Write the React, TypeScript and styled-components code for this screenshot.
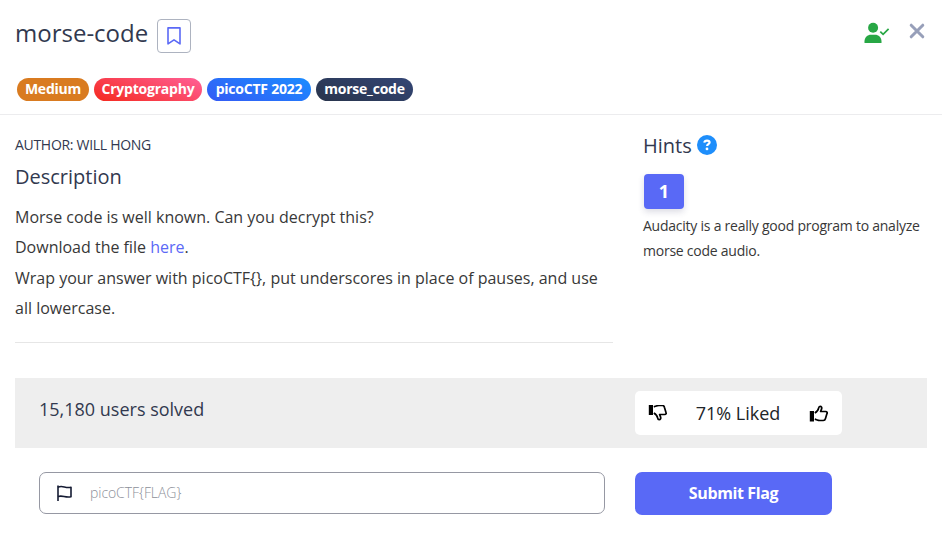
import React from "react";
import styled, { createGlobalStyle } from "styled-components";

const GlobalStyle = createGlobalStyle`
  * { box-sizing: border-box; }
  body {
    margin: 0;
    background: #fff;
    color: #383838;
    font-family: "Open Sans", sans-serif;
    font-size: 16px;
  }
  h1, h2, p { margin: 0; font-weight: 400; }
  button, input { font-family: inherit; }
`;

const Modal = styled.main`
  width: 942px;
  height: 543px;
  background: #fff;
  overflow: hidden;
`;

const Header = styled.header`
  height: 115px;
  padding: 18px 15px 0;
  border-bottom: 1px solid #ececee;
`;

const TitleRow = styled.div`
  display: flex;
  align-items: flex-start;
  height: 35px;
`;

const Title = styled.h1`
  color: #32394f;
  font-size: 24px;
  line-height: 30px;
  width: 142px;
  white-space: nowrap;
`;

const BookmarkButton = styled.button`
  display: flex;
  align-items: center;
  justify-content: center;
  width: 34px;
  height: 34px;
  margin-top: 1px;
  padding: 0;
  border: 1px solid #adb3c0;
  border-radius: 4px;
  background: #fff;
`;

const HeaderActions = styled.div`
  display: flex;
  align-items: flex-start;
  gap: 19px;
  margin-left: auto;
  padding: 4px 2px 0 0;
`;

const CloseButton = styled.button`
  display: flex;
  padding: 1px 0 0;
  border: 0;
  background: none;
`;

const Tags = styled.div`
  display: flex;
  gap: 5px;
  padding: 25px 0 0 2px;
`;

const Tag = styled.span<{ $fill: string; $width: number }>`
  width: ${(p) => p.$width}px;
  height: 23px;
  border-radius: 12px;
  background: ${(p) => p.$fill};
  color: #fff;
  font-size: 14px;
  font-weight: 700;
  letter-spacing: -0.22px;
  line-height: 22px;
  text-align: center;
  white-space: nowrap;
`;

const Columns = styled.div`
  display: grid;
  grid-template-columns: 598px 284px;
  column-gap: 30px;
  height: 263px;
  padding: 0 15px;
`;

const Details = styled.section`
  height: 228px;
  padding-top: 20px;
  border-bottom: 1px solid #e6e6e6;
`;

const Author = styled.p`
  color: #32394f;
  font-size: 14px;
  line-height: 20px;
  letter-spacing: -0.3px;
`;

const Subtitle = styled.h2`
  display: flex;
  align-items: center;
  gap: 5px;
  color: #32394f;
  font-size: 20px;
  line-height: 24px;
`;

const DescriptionTitle = styled(Subtitle)`
  margin: 10px 0 13px;
`;

const Description = styled.div`
  p { line-height: 30.4px; }
`;

const Link = styled.a`
  color: #5b69f6;
  text-decoration: none;
`;

const Hints = styled.section`
  padding-top: 19px;
  svg { margin-top: -2px; }
`;

const HintButton = styled.button`
  display: block;
  width: 40px;
  height: 35px;
  margin: 16px 0 4px 1px;
  padding: 0 0 2px;
  border: 0;
  border-radius: 4px;
  background: #5969f6;
  box-shadow: 0 3px 6px rgba(50, 50, 93, 0.17);
  color: #fff;
  font-size: 18px;
  font-weight: 700;
`;

const HintText = styled.p`
  font-size: 14px;
  letter-spacing: -0.24px;
  line-height: 25px;
`;

const StatsBar = styled.section`
  display: grid;
  grid-template-columns: 596px 207px;
  height: 70px;
  margin: 0 15px;
  padding: 13px 0 0 24px;
  background: #eee;
`;

const Solved = styled.p`
  color: #32394f;
  font-size: 18px;
  line-height: 37px;
`;

const Rating = styled.div`
  display: flex;
  align-items: center;
  justify-content: space-between;
  height: 44px;
  padding: 0 14px 0 13px;
  border-radius: 5px;
  background: #fff;
  color: #212529;
  font-size: 18px;
`;

const SubmitRow = styled.form`
  display: grid;
  grid-template-columns: 566px 197px;
  column-gap: 30px;
  padding: 24px 39px 0;
`;

const FlagField = styled.label`
  display: flex;
  align-items: center;
  height: 42px;
  padding: 0 0 1px 17px;
  border: 1px solid #9698a3;
  border-radius: 7px;
`;

const FlagInput = styled.input`
  flex: 1;
  margin-left: 18px;
  padding: 0;
  border: 0;
  outline: 0;
  background: none;
  font-size: 14px;
  font-weight: 300;
  letter-spacing: -0.06px;
  &::placeholder { color: #8d9099; opacity: 1; }
`;

const SubmitButton = styled.button`
  height: 43px;
  padding: 0 0 2px;
  border: 0;
  border-radius: 7px;
  background: #5969f6;
  color: #fff;
  font-size: 16px;
  font-weight: 700;
  letter-spacing: -0.38px;
`;

const BookmarkIcon = () => (
  <svg width="14" height="18" viewBox="0 0 14 18" fill="none" stroke="#5b69f6" strokeWidth="1.6">
    <path d="M1 .9h12v16L7 12.9 1 16.9Z" strokeLinejoin="round" />
  </svg>
);

const SolvedUserIcon = () => (
  <svg width="26" height="22" viewBox="0 0 26 22" fill="#28a745">
    <circle cx="9.1" cy="5.8" r="5" />
    <path d="M.5 21v-1.700c0-4 3-6.600 6.500-6.600h4c3.500 0 6.500 2.600 6.500 6.600V21Z" />
    <path d="m16.300 9.600 2.800 2.800 5.500-5.600" fill="none" stroke="#28a745" strokeWidth="1.7" />
  </svg>
);

const CloseIcon = () => (
  <svg width="16" height="16" viewBox="0 0 16 16" stroke="#979fb9" strokeWidth="3" strokeLinecap="round">
    <path d="m2.200 2.200 11.600 11.600M13.800 2.200 2.200 13.800" />
  </svg>
);

const HelpIcon = () => (
  <svg width="20" height="20" viewBox="0 0 20 20">
    <circle cx="10" cy="10" r="10" fill="#1e8efb" />
    <path d="M7.300 7.600c.2-1.300 1.300-2 2.700-2 1.600 0 2.600.7 2.600 1.900 0 1.700-2.500 1.700-2.500 3.500" fill="none" stroke="#fff" strokeWidth="2.2" />
    <circle cx="10" cy="13.900" r="1.400" fill="#fff" />
  </svg>
);

const ThumbIcon = ({ down = false }: { down?: boolean }) => (
  <svg width="19" height="17" viewBox="0 0 19 17">
    <g transform={down ? "translate(0 16) scale(1 -1)" : undefined}>
      <path d="M.8 6h4.200v10.500H.8Z" fill="#000" />
      <path
        d="M5.800 8.100c2-1.100 3.500-3 3.800-4.900.2-1.100.6-1.800 1.500-1.800 1.400 0 1.900 1.200 1.500 2.500l-1 2.600h5c1.600 0 2 1.300 1.300 2.300l-1.500 5c-.3 1.300-.9 1.700-2.100 1.700h-3.300c-2 0-3.200-.8-5.200-1.400"
        fill="none"
        stroke="#000"
        strokeWidth="1.7"
        strokeLinejoin="round"
      />
    </g>
  </svg>
);

const FlagIcon = () => (
  <svg width="15" height="16" viewBox="0 0 15 16" fill="none" stroke="#151b33" strokeWidth="1.6">
    <path d="M1 .5V16" />
    <path d="M1 2.200c4.500-2.200 7.200 1.300 13 0v9.500c-5.800 1.500-8.500-2-13-.1" strokeLinejoin="round" />
  </svg>
);

const tags = [
  { label: "Medium", fill: "#d97b20", width: 72 },
  { label: "Cryptography", fill: "linear-gradient(20deg, #f52c24 5%, #ff5d91 95%)", width: 108 },
  { label: "picoCTF 2022", fill: "linear-gradient(20deg, #335df5 5%, #1c8aff 95%)", width: 104 },
  { label: "morse_code", fill: "linear-gradient(20deg, #29354d 5%, #334573 95%)", width: 97 },
];

export default function App() {
  return (
    <>
      <GlobalStyle />
      <Modal>
        <Header>
          <TitleRow>
            <Title>morse-code</Title>
            <BookmarkButton aria-label="Bookmark"><BookmarkIcon /></BookmarkButton>
            <HeaderActions>
              <SolvedUserIcon />
              <CloseButton aria-label="Close"><CloseIcon /></CloseButton>
            </HeaderActions>
          </TitleRow>
          <Tags>
            {tags.map((t) => (
              <Tag key={t.label} $fill={t.fill} $width={t.width}>{t.label}</Tag>
            ))}
          </Tags>
        </Header>
        <Columns>
          <Details>
            <Author>AUTHOR: WILL HONG</Author>
            <DescriptionTitle>Description</DescriptionTitle>
            <Description>
              <p>Morse code is well known. Can you decrypt this?</p>
              <p>Download the file <Link href="#">here</Link>.</p>
              <p>{"Wrap your answer with picoCTF{}, put underscores in place of pauses, and use all lowercase."}</p>
            </Description>
          </Details>
          <Hints>
            <Subtitle>Hints <HelpIcon /></Subtitle>
            <HintButton>1</HintButton>
            <HintText>Audacity is a really good program to analyze morse code audio.</HintText>
          </Hints>
        </Columns>
        <StatsBar>
          <Solved>15,180 users solved</Solved>
          <Rating>
            <ThumbIcon down />
            <span>71% Liked</span>
            <ThumbIcon />
          </Rating>
        </StatsBar>
        <SubmitRow onSubmit={(e) => e.preventDefault()}>
          <FlagField>
            <FlagIcon />
            <FlagInput placeholder="picoCTF{FLAG}" />
          </FlagField>
          <SubmitButton>Submit Flag</SubmitButton>
        </SubmitRow>
      </Modal>
    </>
  );
}
